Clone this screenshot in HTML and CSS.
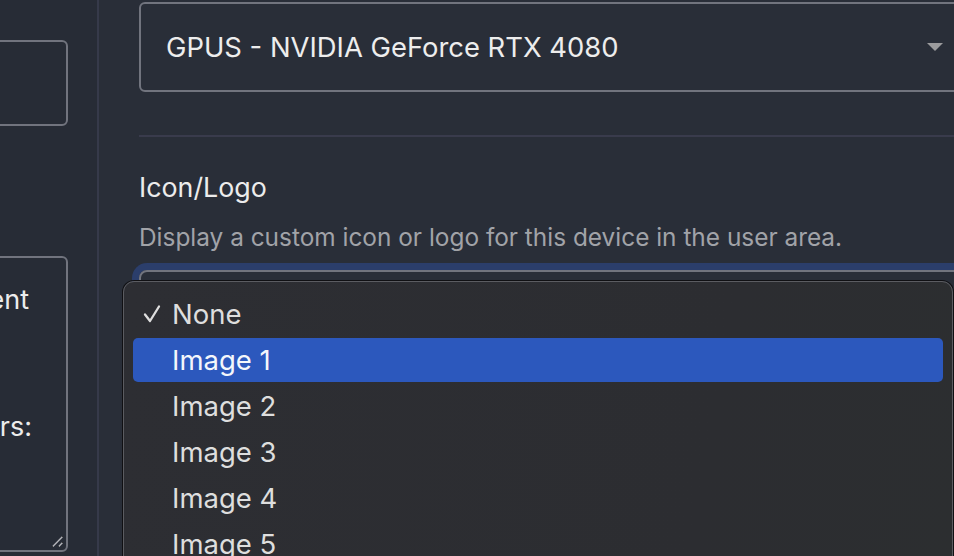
FILE: index.html
```html
<!DOCTYPE html>
<html lang="en">
<head>
  <meta charset="UTF-8" />
  <meta name="viewport" content="width=device-width, initial-scale=1" />
  <title>Device Settings</title>
  <link rel="stylesheet" href="styles.css">
</head>
<body>

  <div class="layout">
    <aside class="sidebar">
      <div class="field-box"></div>
      <div class="notes-box">
        <div class="notes-line">Placement</div>
        <div class="notes-line notes-gap">Users:</div>
        <svg class="resize-grip" width="14" height="14" viewBox="0 0 14 14">
          <path d="M2 13 L13 2" stroke="#111" stroke-width="1" />
          <path d="M2.8 12.4 L12.4 2.8" stroke="#b5b6bb" stroke-width="1.4" />
          <path d="M8 13 L13 8" stroke="#111" stroke-width="1" />
          <path d="M8.8 12.4 L12.4 8.8" stroke="#b5b6bb" stroke-width="1.4" />
        </svg>
      </div>
    </aside>

    <main class="content">
      <div class="select-box">
        <span>GPUS - NVIDIA GeForce RTX 4080</span>
        <span class="caret"></span>
      </div>

      <hr class="divider" />

      <h2 class="field-title">Icon/Logo</h2>
      <p class="field-help">Display a custom icon or logo for this device in the user area.</p>

      <div class="select-wrap">
        <div class="select-box select-focused"></div>

        <ul class="menu">
          <li class="menu-item">
            <svg class="check" width="18" height="20" viewBox="0 0 18 20">
              <path d="M2 10.5 L7 17 L16 2.5" fill="none" stroke="#dedede" stroke-width="2.3" stroke-linecap="round" stroke-linejoin="round" />
            </svg>
            None
          </li>
          <li class="menu-item active">Image 1</li>
          <li class="menu-item">Image 2</li>
          <li class="menu-item">Image 3</li>
          <li class="menu-item">Image 4</li>
          <li class="menu-item">Image 5</li>
        </ul>
      </div>
    </main>
  </div>

</body>
</html>
```

FILE: styles.css
```css
* {
  box-sizing: border-box;
}
body {
  margin: 0;
  height: 556px;
  overflow: hidden;
  font-family: Inter, "Noto Sans", sans-serif;
  background: #292e38;
  color: #ececec;
}

.layout {
  display: flex;
  height: 556px;
}

/* left column, mostly scrolled out of view */
.sidebar {
  flex: 0 0 300px;
  min-width: 0;
  overflow: hidden;
  margin-left: -201px;
  padding: 40px 29px 0 0;
  background: #272c36;
  border-right: 2px solid #363a4a;
}
.field-box {
  height: 86px;
  border: 2px solid #71747e;
  border-radius: 6px;
}
.notes-box {
  position: relative;
  margin-top: 130px;
  height: 296px;
  border: 2px solid #71747e;
  border-radius: 6px;
  padding-top: 21px;
  font-size: 27px;
  line-height: 42px;
}
.notes-line {
  text-align: right;
  padding-right: 37px;
  white-space: nowrap;
}
.notes-gap {
  margin-top: 85px;
  padding-right: 34px;
}
.resize-grip {
  position: absolute;
  right: 2px;
  bottom: 2px;
}

.content {
  flex: 0 0 872px;
  padding-left: 40px;
}

.select-box {
  margin-top: 2px;
  height: 90px;
  border: 2px solid #71747e;
  border-radius: 6px;
  padding: 0 26px 0 25px;
  display: flex;
  align-items: center;
  justify-content: space-between;
  font-size: 27.4px;
  color: #ededed;
}
.caret {
  width: 0;
  height: 0;
  border-left: 8px solid transparent;
  border-right: 8px solid transparent;
  border-top: 8px solid #9b9b9d;
}

.divider {
  margin: 43px 0 0;
  border: none;
  border-top: 2px solid #393b4c;
}

.field-title {
  margin: 34px 0 0;
  font-size: 26.8px;
  line-height: 32px;
  font-weight: 400;
  color: #ececec;
}
.field-help {
  margin: 20px 0 0;
  font-size: 24.4px;
  line-height: 28px;
  color: #a1a3a8;
}

.select-wrap {
  position: relative;
  margin-top: 19px;
}
.select-focused {
  margin-top: 0;
  box-shadow: 0 0 0 7px #2b3e6b;
  border-radius: 8px;
}

/* open option list */
.menu {
  position: absolute;
  top: 11px;
  left: -16px;
  width: 830px;
  height: 300px;
  margin: 0;
  padding: 10px 9px 0;
  list-style: none;
  background: linear-gradient(100deg, #2d2e33, #2c2d31 70%, #2c2e30);
  border: 1px solid #5b5c61;
  border-radius: 11px;
  box-shadow: 0 0 0 1px #101013;
}
.menu-item {
  height: 44px;
  margin-bottom: 2px;
  padding-left: 39px;
  position: relative;
  display: flex;
  align-items: center;
  font-size: 27.5px;
  color: #dedede;
  border-radius: 5px;
}
.menu-item.active {
  background: #2c58bd;
  color: #f4f6fb;
}
.check {
  position: absolute;
  left: 10px;
  top: 12px;
}
```
